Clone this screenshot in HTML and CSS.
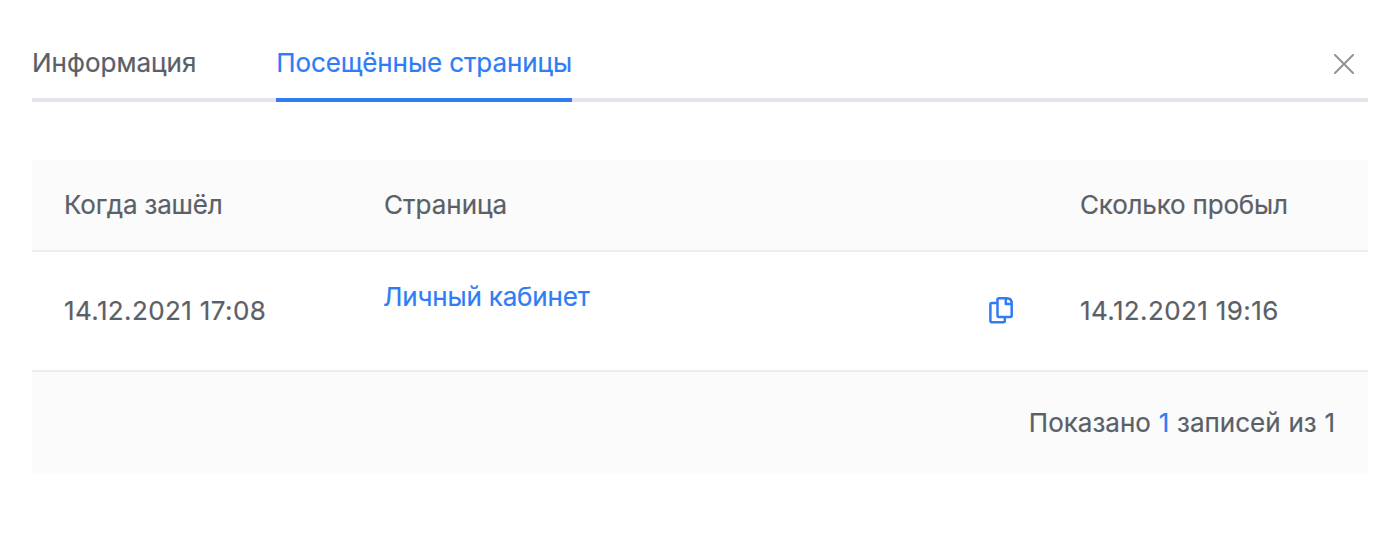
FILE: index.html
```
<!DOCTYPE html>
<html lang="ru">
<head>
<meta charset="utf-8">
<title>Посещённые страницы</title>
<link rel="stylesheet" href="styles.css">
</head>
<body>
<main class="modal">
  <header class="tabs">
    <button class="tab">Информация</button>
    <button class="tab tab-active">Посещённые страницы</button>
    <button class="close" aria-label="Закрыть">
      <svg width="20" height="20" viewBox="0 0 20 20"><path d="M1 1L19 19M19 1L1 19" fill="none" stroke="#909399" stroke-width="2" stroke-linecap="round"/></svg>
    </button>
  </header>
  <section class="table">
    <div class="row row-head">
      <div class="cell tight">Когда зашёл</div>
      <div class="cell">Страница</div>
      <div class="cell tight">Сколько пробыл</div>
    </div>
    <div class="row row-body">
      <div class="cell date">14.12.2021 17:08</div>
      <div class="cell cell-page">
        <a class="link tight">Личный кабинет</a>
        <svg class="copy" width="26" height="28" viewBox="0 0 26 28"><path d="M11 1.2H18.8Q23.7 1.2 23.7 6.4V18.4Q23.7 19.9 22.2 19.9H11Q9.5 19.9 9.5 18.4V2.7Q9.5 1.2 11 1.2ZM17.8 1.5V7H23.5M9 5.9H3.9Q2.4 5.9 2.4 7.4V23.7Q2.4 25.2 3.9 25.2H15.3Q16.8 25.2 16.8 23.7V20.4" fill="none" stroke="#2f7cf6" stroke-width="2.5" stroke-linejoin="round"/></svg>
      </div>
      <div class="cell date">14.12.2021 19:16</div>
    </div>
    <div class="summary"><span>Показано <b>1</b> записей из 1</span></div>
  </section>
</main>
</body>
</html>
```
FILE: styles.css
```
* { box-sizing: border-box; }
body { margin: 0; background: #fff; color: #5a6067; font: 26px/32px Inter, "Liberation Sans", sans-serif; -webkit-text-stroke: .2px currentColor; }
.modal { height: 552px; padding: 32px 32px 0; }
.tabs { display: flex; height: 70px; border-bottom: 4px solid #e4e4eb; }
.tab { height: 70px; margin: 0 80px 0 0; padding: 0 0 4px; border: 0; border-bottom: 4px solid transparent; background: none; color: inherit; font: inherit; white-space: nowrap; }
.tab-active { border-color: #2f7cf6; color: #2f7cf6; letter-spacing: -.1px; }
.close { margin-left: auto; width: 48px; height: 64px; padding: 0; border: 0; background: none; }
.close svg { display: block; margin: 0 auto; }
.table { margin-top: 58px; }
.row { display: grid; grid-template-columns: 320px 696px 1fr; align-items: center; border-bottom: 2px solid #ebedf2; }
.row-head { height: 92px; background: #fbfbfb; }
.row-body { height: 120px; }
.cell { padding-left: 32px; white-space: nowrap; }
.tight { letter-spacing: -.18px; }
.date { letter-spacing: .38px; }
.cell-page { display: flex; justify-content: space-between; align-items: center; padding: 0 34px 0 31px; }
.copy { overflow: visible; }
.link { color: #2f7cf6; padding-bottom: 28px; }
.summary { display: flex; height: 102px; align-items: center; justify-content: flex-end; padding-right: 33px; background: #fbfbfb; word-spacing: .5px; }
.summary b { color: #2f7cf6; font-weight: 400; }
```
